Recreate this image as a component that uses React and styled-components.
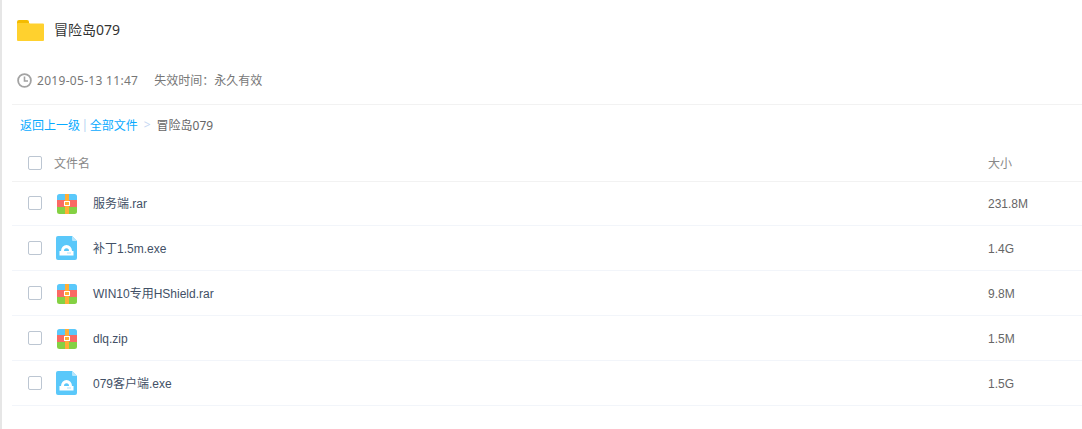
import React from 'react';
import styled, { createGlobalStyle } from 'styled-components';

const GlobalStyle = createGlobalStyle`
  html, body {
    margin: 0;
    padding: 0;
    background: #fff;
    overflow: hidden;
  }
  body {
    font-family: "Noto Sans", "Noto Sans CJK SC", sans-serif;
  }
`;

const files = [
  { name: '服务端.rar', size: '231.8M', type: 'zip' },
  { name: '补丁1.5m.exe', size: '1.4G', type: 'exe' },
  { name: 'WIN10专用HShield.rar', size: '9.8M', type: 'zip' },
  { name: 'dlq.zip', size: '1.5M', type: 'zip' },
  { name: '079客户端.exe', size: '1.5G', type: 'exe' },
];

const Page = styled.div`
  width: 1082px;
  height: 429px;
  box-sizing: border-box;
  border-left: 2px solid #e6e6e6;
  padding-left: 10px;
`;

const TitleBar = styled.div`
  display: flex;
  align-items: center;
  height: 60px;
  padding-left: 5px;
  gap: 10px;
`;

const Title = styled.h2`
  margin: 0;
  font-size: 14px;
  font-weight: 400;
  line-height: 20px;
  color: #333;
`;

const Meta = styled.div`
  display: flex;
  align-items: center;
  height: 40px;
  padding: 0 0 4px 5px;
  border-bottom: 1px solid #f2f2f2;
  font-size: 12px;
  color: #777;
`;

const MetaDate = styled.span`
  margin-left: 5px;
  letter-spacing: 0.3px;
`;

const MetaExpire = styled.span`
  margin-left: 16px;
`;

const Crumbs = styled.div`
  display: flex;
  align-items: center;
  box-sizing: border-box;
  height: 41px;
  padding: 0 0 2px 8px;
  font-size: 12px;
  color: #666;
`;

const CrumbLink = styled.a`
  color: #09aaff;
  text-decoration: none;
`;

const CrumbSep = styled.span`
  color: #b5d3f3;
  margin: 0 1.500px;
`;

const CrumbArrow = styled.span`
  color: #c5d8f3;
  margin: 0 6px;
`;

const Row = styled.div`
  display: grid;
  grid-template-columns: 42px ${(p) => (p.$head ? '934px' : '39px 895px')} 1fr;
  align-items: center;
  box-sizing: border-box;
  height: ${(p) => (p.$head ? '36px' : p.$first ? '44px' : '45px')};
  padding-bottom: ${(p) => (p.$head || p.$first ? '1px' : '0')};
  border-bottom: 1px solid ${(p) => (p.$head ? '#f2f2f2' : '#f2f5fa')};
  font-size: 12px;
  line-height: 16px;
  font-family: "Liberation Sans", "Noto Sans CJK SC", sans-serif;
  color: ${(p) => (p.$head ? '#888' : '#425066')};
`;

const CheckCell = styled.div`
  padding-left: 16px;
  display: flex;
`;

const Check = styled.span`
  width: 12px;
  height: 12px;
  border: 1px solid #bcc6d2;
  border-radius: 2px;
  background: #fff;
`;

const IconCell = styled.div`
  display: flex;
  padding-left: ${(p) => (p.$zip ? '3px' : '2px')};
  padding-top: ${(p) => (p.$zip ? '2px' : '0')};
`;

const NameText = styled.div`
  padding-top: 2px;
`;

const SizeText = styled.div`
  padding-top: 2px;
  color: ${(p) => (p.$head ? '#888' : '#666')};
`;

const FolderIcon = () => (
  <svg width="27" height="21" viewBox="0 0 27 21">
    <path d="M0 2a2 2 0 0 1 2-2h8a2 2 0 0 1 2 2v2H0z" fill="#f4bc00" />
    <path d="M0 4a1 1 0 0 1 1-1h11l1 0.5h13a1 1 0 0 1 1 1V20a1 1 0 0 1-1 1H1a1 1 0 0 1-1-1z" fill="#ffd12e" />
  </svg>
);

const ClockIcon = () => (
  <svg width="15" height="15" viewBox="0 0 15 15" fill="none" stroke="#a3a3a3">
    <circle cx="7.500" cy="7.500" r="6.400" strokeWidth="1.800" />
    <path d="M7.500 3.500v4.500h3.500" strokeWidth="1.600" />
  </svg>
);

const ZipIcon = () => (
  <svg width="20" height="20" viewBox="0 0 20 20">
    <path d="M0 6V2.500A2.500 2.500 0 0 1 2.500 0h15A2.500 2.500 0 0 1 20 2.500V6z" fill="#5ac8fa" />
    <rect y="6" width="20" height="7" fill="#fa6a64" />
    <path d="M0 13h20v4.500a2.500 2.500 0 0 1-2.500 2.500h-15A2.500 2.500 0 0 1 0 17.500z" fill="#84d143" />
    <rect x="8" width="4" height="20" fill="#ffae35" />
    <rect x="7" y="7" width="6" height="5" fill="#fff" />
    <rect x="8" y="8" width="4" height="3" fill="#ffae35" />
  </svg>
);

const ExeIcon = () => (
  <svg width="21" height="24" viewBox="0 0 21 24">
    <path d="M2 0h14l5 5v17a2 2 0 0 1-2 2H2a2 2 0 0 1-2-2V2a2 2 0 0 1 2-2z" fill="#5ac8fa" />
    <path d="M16 0l5 5h-4a1 1 0 0 1-1-1z" fill="#b5e6fd" />
    <path d="M5 15a5.500 6 0 0 1 11 0h-3a2.500 2.800 0 0 0-5 0z" fill="#fff" />
    <rect x="3.500" y="15" width="14" height="4.500" fill="#fff" />
    <rect x="11.500" y="16.500" width="1" height="1" fill="#5ac8fa" />
    <rect x="13.500" y="16.500" width="1" height="1" fill="#5ac8fa" />
  </svg>
);

const App = () => (
  <Page>
    <GlobalStyle />
    <TitleBar>
      <FolderIcon />
      <Title>冒险岛079</Title>
    </TitleBar>
    <Meta>
      <ClockIcon />
      <MetaDate>2019-05-13 11:47</MetaDate>
      <MetaExpire>失效时间：永久有效</MetaExpire>
    </Meta>
    <Crumbs>
      <CrumbLink href="#">返回上一级</CrumbLink>
      <CrumbSep>|</CrumbSep>
      <CrumbLink href="#">全部文件</CrumbLink>
      <CrumbArrow>&gt;</CrumbArrow>
      <span>冒险岛079</span>
    </Crumbs>
    <Row $head>
      <CheckCell><Check /></CheckCell>
      <NameText>文件名</NameText>
      <SizeText $head>大小</SizeText>
    </Row>
    {files.map((f, i) => (
      <Row key={f.name} $first={i === 0}>
        <CheckCell><Check /></CheckCell>
        <IconCell $zip={f.type === 'zip'}>{f.type === 'zip' ? <ZipIcon /> : <ExeIcon />}</IconCell>
        <NameText>{f.name}</NameText>
        <SizeText>{f.size}</SizeText>
      </Row>
    ))}
  </Page>
);

export default App;
